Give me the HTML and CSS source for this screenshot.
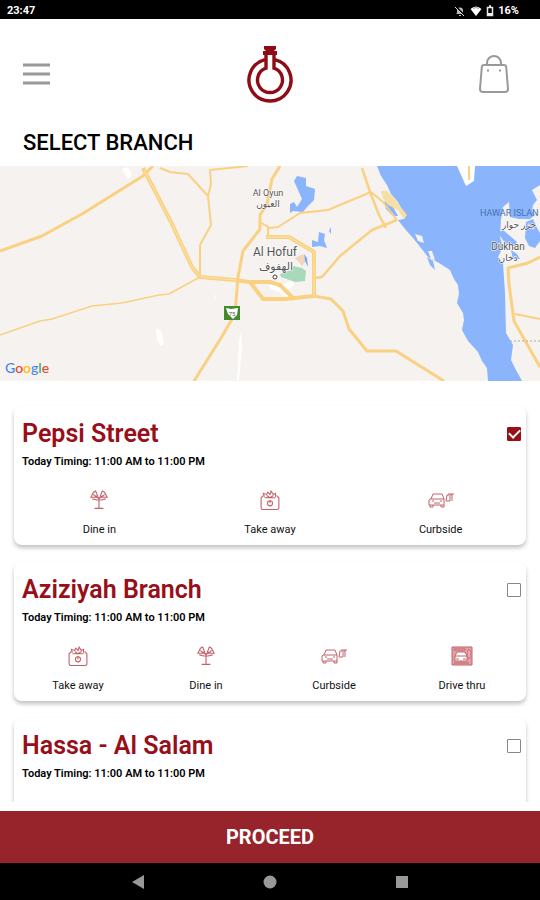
FILE: index.html
```html
<!DOCTYPE html>
<html lang="en">
<head>
<meta charset="utf-8">
<meta name="viewport" content="width=device-width, initial-scale=1">
<title>Select Branch</title>
<link rel="stylesheet" href="styles.css">
</head>
<body>
<svg class="sprite" aria-hidden="true">
  <symbol id="dine" viewBox="0 0 18 18">
    <path d="M1 6.500h6M11 6.500h6M2 6l2-4 2-1 2 5M10 6l2-5 2 1 2 4M3 8l4 1h4l4-1M9 6v10M5 16.500h8M6 5l3 3 3-3M4 4l2 2M14 4l-2 2"/>
  </symbol>
  <symbol id="bag" viewBox="0 0 18 18">
    <path d="M3 5L1 7v9q0 1.500 1.500 1.500h13q1.500 0 1.500-1.500V7l-2-2M4 7h10M4 6L3 3l3 1 1-2 2 2 1-3 2 3 2-1v3M6 5l3 2 3-2"/>
    <circle cx="9" cy="12" r="2.300"/><path d="M9 9v3"/>
  </symbol>
  <symbol id="curb" viewBox="0 0 26 18">
    <path d="M3 8l2-5h9l2 5M2 8h14v6H1V9zM4 10h2M12 10h2M6 12h6M2 14v2h3v-2M13 14v2h3v-2M18 10l1-6h5M18 10h4V5M24 3v7M20 3h6"/>
  </symbol>
  <symbol id="drive" viewBox="0 0 22 20">
    <path class="panel" d="M1 1h20v18H1z"/>
    <path class="cut" d="M4 10l2-4h8l2 4v5H4zM17 4h2v8h-2zM3 3h11v1H3z"/>
    <path d="M4 10h12M5 13h3M12 13h3M3 17h15"/>
  </symbol>
</svg>

<div class="screen">
  <div class="status">
    <span>23:47</span>
    <div class="status-right">
      <svg width="12" height="12" viewBox="0 0 12 12"><path d="M3 8V5.500Q3 2.500 6 2.500T9 5.500V8l1 1H2zM5 10h2v1H5z" fill="#bbb"/><path d="M1 1l10 10" stroke="#000" stroke-width="2"/><path d="M1 2l9 9" stroke="#ddd"/></svg>
      <svg width="12" height="12" viewBox="0 0 12 12"><path d="M0.500 4Q6-1 11.500 4L6 11z" fill="#fff"/><path d="M3 3.500Q6 1.500 9 3.500" fill="none" stroke="#999"/></svg>
      <svg width="8" height="12" viewBox="0 0 8 12"><path d="M1.500 2.500h5v8h-5zM3 1h2" fill="none" stroke="#e8e8e8" stroke-width="1.500"/><path d="M2 8h4v2H2z" fill="#eee"/></svg>
      <span>16%</span>
    </div>
  </div>

  <header class="header">
    <button class="icon-button" type="button" aria-label="Menu">
      <svg width="27" height="22" viewBox="0 0 27 22"><path d="M0 2h27M0 11h27M0 20h27" stroke="#999" stroke-width="3"/></svg>
    </button>
    <svg width="48" height="58" viewBox="0 0 48 58" role="img" aria-label="Logo">
      <g fill="none" stroke="#8f0c16" stroke-width="3.400">
        <path d="M19 14.600A21 21 0 1 0 29 14.600"/>
        <path d="M20 9v14.200A12.500 12.500 0 1 0 28 23.200V9"/>
      </g>
      <path d="M18 1h12v3l-2 2h3v4H17V6h3l-2-2z" fill="#8f0c16"/>
    </svg>
    <button class="icon-button" type="button" aria-label="Cart">
      <svg width="30" height="40" viewBox="0 0 30 40" fill="none" stroke="#999" stroke-width="2"><path d="M5 11h20q2 0 2.200 2L29 35q0 3-3 3H4q-3 0-3-3l1.800-22Q3 11 5 11z"/><path d="M8 11V9a7 7 0 0 1 14 0v2"/><path d="M8 16.500h2M20 16.500h2"/></svg>
    </button>
  </header>

  <h1 class="page-title">SELECT BRANCH</h1>

  <svg class="map" viewBox="0 166 540 215" preserveAspectRatio="xMidYMid slice" role="img" aria-label="Map of branches">
    <path fill="#f5f2ef" d="M0 166h540v215H0z"/>
    <path fill="#fff" d="M122 169l6-2 4 8-4 4zM156 328l5 3 3 12-3 3-4-6zM213 289l2 10 2 3zM239 340l2-8 1 14-3 34h-2zM270 285l8-4 4 4 10-5 3 5-8 5 3 10-12-9-8-2z"/>
    <path fill="#8ab4fc" d="M377 166L381 176 387 185 391 194 398 202 402 210 406 215 404 219 398 220 405 229 413 238 421 248 428 257 439 263 450 270 454 279 458 285 459 294 457 303 463 313 464 320 462 330 468 341 478 352 482 361 487 368 488 381H522L516 370 511 360 513 345 506 333 505 293 503 263 498 257 503 247 500 237 501 220 503 207 509 202 510 217 519 219 530 219 535 215 532 211 533 205 537 200 532 190 540 185V166z"/>
    <path fill="#8ab4fc" d="M526 222l7-3 4 9 3 5v8l-5 7-6-2-4-8zM498 233l5-3 14 12-3 5-9-4zM511 250l6 4 3 5-7 0z"/>
    <path fill="#fff" d="M457 166l9 20 8-5 1-15z"/>
    <path fill="#f5f2ef" d="M415 234l7 2 2 7-6-2zM428 251l4 0 3 9-4-1zM427 257l6 4 1 4-5-3z"/>
    <path fill="#8ab4fc" d="M427 257l6 4 2 9-5-5zM384 201l9 6 5 9-5 0-7-7z"/>
    <path fill="#f7dfa4" d="M381 191l6 0 7 7 6 8 7 9-3 4-6-9-10-5-5-7z"/>
    <path fill="#8ab4fc" d="M294 181l3-5 9 2 0 8 9 3-1 11-7 7-4 5-10-1-3 2 0-9 4-2 3 5 5-8-4-9zM312 240l6 2 1-10 6 2-1 6 3 8-7-2-8 1zM329 231l2-4 0 7z"/>
    <path fill="#a8d9bb" d="M280 274l11-4 2-4 9 2 4 3-1 10-10 1-14-5z"/>
    <path fill="#f3d5bc" d="M295 258l8-4 3 7-4 5z"/>
    <path fill="#78a9ef" d="M304 254l3 4 1 9-3-6z"/>
    <g class="road">
      <path d="M0 251l42-15 40-22 61-38 10-10" stroke-width="3"/>
      <path d="M143 168l28 54 21 45 8 10 35 3 14 2h21" stroke-width="4"/>
      <path d="M0 335l40-14 12-2 40-13 30-3 37-8 10-1 31-17" stroke-width="1.500"/>
      <path d="M160 168l10 4 18 2 20 22 3 29-11 20v32M208 196l3-12-1-14 38-4" stroke-width="2"/>
      <path d="M280 166l-8 13-5 25-7 11 0 14-17 22-5 26-3 37-14 24-27 43" stroke-width="3"/>
      <path d="M260 222l10 6 8-1 22-14 28-3 43-18 12 10 14 18M260 222l8 5v10" stroke-width="2"/>
      <path d="M266 237h23l25 15v44l-29 3h-22l-13-17h20l10 3 14 14" stroke-width="4"/>
      <path d="M314 296l17 3 12 12 6 18 18 22 29 0 48 30" stroke-width="3"/>
      <path d="M315 278l7-1 18-21 32-26 25-10M362 168l8 24 9 23 7 13" stroke-width="2.500"/>
      <path d="M508 267l1 17 5 37 26 46M508 268l20-5 12-6" stroke-width="3"/>
      <path d="M515 314l25 5M469 166v14" stroke-width="2"/>
    </g>
    <path class="road-core" d="M144 170l28 54 21 45 8 8 35 3M266 237h23l25 15v44"/>
    <path d="M510 341h30" stroke="#aaa" stroke-dasharray="2 2"/>
    <path fill="#46882d" d="M224 306h16v14h-16z"/><path fill="#fff" d="M226 308l5 1 7-1-1 7-4 4-5-5z"/>
    <g class="place">
      <text x="268" y="196" font-size="9">Al Oyun</text>
      <text x="268" y="207" font-size="9">العيون</text>
      <text x="275" y="256" font-size="12">Al Hofuf</text>
      <text x="276" y="270" font-size="11">الهفوف</text>
      <text x="508" y="250" font-size="10">Dukhan</text>
      <text x="508" y="261" font-size="9">دخان</text>
      <text x="519" y="228" font-size="9">جزر حوار</text>
      <text class="sea" x="480" y="216" font-size="10">HAWAR ISLAN</text>
      <text class="route" x="232" y="316" font-size="6">75</text>
    </g>
    <circle cx="275" cy="277" r="2" fill="#fff" stroke="#444"/>
    <text class="google" x="5" y="373"><tspan fill="#4285f4">G</tspan><tspan fill="#ea4335">o</tspan><tspan fill="#fbbc05">o</tspan><tspan fill="#4285f4">g</tspan><tspan fill="#34a853">l</tspan><tspan fill="#ea4335">e</tspan></text>
  </svg>

  <main class="list">
    <article class="card">
      <div class="card-head">
        <h2><label for="b1">Pepsi Street</label></h2>
        <input type="checkbox" id="b1" checked>
      </div>
      <p class="timing">Today Timing: 11:00 AM to 11:00 PM</p>
      <ul class="services">
        <li><svg class="svc"><use href="#dine"/></svg>Dine in</li>
        <li><svg class="svc"><use href="#bag"/></svg>Take away</li>
        <li><svg class="svc"><use href="#curb"/></svg>Curbside</li>
      </ul>
    </article>
    <article class="card">
      <div class="card-head">
        <h2><label for="b2">Aziziyah Branch</label></h2>
        <input type="checkbox" id="b2">
      </div>
      <p class="timing">Today Timing: 11:00 AM to 11:00 PM</p>
      <ul class="services">
        <li><svg class="svc"><use href="#bag"/></svg>Take away</li>
        <li><svg class="svc"><use href="#dine"/></svg>Dine in</li>
        <li><svg class="svc"><use href="#curb"/></svg>Curbside</li>
        <li><svg class="svc"><use href="#drive"/></svg>Drive thru</li>
      </ul>
    </article>
    <article class="card">
      <div class="card-head">
        <h2><label for="b3">Hassa - Al Salam</label></h2>
        <input type="checkbox" id="b3">
      </div>
      <p class="timing">Today Timing: 11:00 AM to 11:00 PM</p>
    </article>
  </main>

  <button class="proceed" type="button">PROCEED</button>

  <nav class="system-nav" aria-label="System">
    <button type="button" aria-label="Back"><svg width="14" height="14" viewBox="0 0 14 14"><path d="M13 0v14L1 7z"/></svg></button>
    <button type="button" aria-label="Home"><svg width="14" height="14" viewBox="0 0 14 14"><circle cx="7" cy="7" r="6.500"/></svg></button>
    <button type="button" aria-label="Recents"><svg width="14" height="14" viewBox="0 0 14 14"><path d="M1 1h12v12H1z"/></svg></button>
  </nav>
</div>
</body>
</html>
```
FILE: styles.css
```css
* {
  box-sizing: border-box;
}

body,
h1,
h2,
p,
ul {
  margin: 0;
  padding: 0;
}

body {
  font-family: Roboto, "Noto Sans", sans-serif;
  color: #111;
  background: #fff;
}

button {
  border: 0;
  padding: 0;
  background: none;
  font: inherit;
}

svg {
  display: block;
}

.sprite {
  display: none;
}

.screen {
  display: flex;
  flex-direction: column;
  height: 100vh;
}

.status {
  display: flex;
  justify-content: space-between;
  align-items: center;
  height: 19px;
  padding: 2px 21px 0 7px;
  background: #000;
  color: #fff;
  font-size: 11px;
  line-height: 16px;
  font-weight: 700;
}

.status-right {
  display: flex;
  align-items: center;
  gap: 4px;
}

.header {
  display: grid;
  grid-template-columns: 1fr auto 1fr;
  align-items: center;
  padding: 26px 31px 26px 23px;
  padding-inline: 23px;
}

.icon-button {
  justify-self: start;
}

.icon-button:last-child {
  justify-self: end;
  padding-right: 8px;
}

.page-title {
  padding: 0 23px 9px;
  font-size: 22px;
  line-height: 28px;
  font-weight: 500;
  color: #000;
}

.map {
  width: 100%;
  height: 215px;
  flex: none;
}

.road {
  fill: none;
  stroke: #fad182;
  stroke-linejoin: round;
}

.road-core {
  fill: none;
  stroke: #fde3ae;
}

.place {
  fill: #555;
  text-anchor: middle;
  paint-order: stroke;
  stroke: #fff;
  stroke-width: 1px;
  font-family: Roboto, "DejaVu Sans", sans-serif;
}

.place .sea {
  fill: #4672b0;
  stroke: none;
  text-anchor: start;
  font-size: 9px;
}

.place .route {
  stroke: none;
}

.google {
  font-family: Lato, sans-serif;
  font-size: 14px;
  font-weight: 500;
}

.list {
  display: flex;
  flex-direction: column;
  gap: 17px;
  flex: 1;
  min-height: 0;
  overflow: hidden;
  padding: 25px 14px 0;
  margin-bottom: 9px;
}

.card {
  flex: none;
  min-height: 139px;
  border-radius: 8px;
  background: #fff;
  box-shadow: 0 3px 4px rgba(0, 0, 0, 0.24);
}

.card-head {
  display: flex;
  justify-content: space-between;
  align-items: center;
  padding: 11px 5px 0 8px;
}

.card h2 {
  font-size: 25px;
  line-height: 34px;
  font-weight: 600;
  color: #980f19;
}

.card input {
  appearance: none;
  display: grid;
  place-items: center;
  width: 14px;
  height: 14px;
  margin: 0;
  border: 1px solid #888;
  border-radius: 1px;
}

.card input:checked {
  border-color: #980f19;
  background: #980f19;
}

.card input:checked::after {
  content: "";
  width: 9px;
  height: 5px;
  margin-bottom: 3px;
  border: solid #fff;
  border-width: 0 0 2px 2px;
  transform: rotate(-45deg);
}

.timing {
  padding: 3px 8px 0;
  font-size: 11px;
  line-height: 16px;
  font-weight: 600;
  color: #000;
}

.services {
  display: grid;
  grid-auto-flow: column;
  grid-auto-columns: 1fr;
  padding: 20px 0 7px;
  list-style: none;
  font-size: 11px;
  line-height: 16px;
}

.services li {
  display: flex;
  flex-direction: column;
  align-items: center;
  gap: 12px;
}

.svc {
  width: 26px;
  height: 20px;
  fill: none;
  stroke: #c4626b;
  stroke-width: 1;
}

.panel {
  fill: #e0a0a6;
}

.cut {
  fill: #fff;
}

.proceed {
  height: 52px;
  flex: none;
  background: #96242a;
  color: #fff;
  font-size: 20px;
  line-height: 26px;
  font-weight: 700;
}

.system-nav {
  display: flex;
  justify-content: center;
  align-items: center;
  gap: 118px;
  height: 37px;
  flex: none;
  background: #000;
  fill: #999;
}
```
